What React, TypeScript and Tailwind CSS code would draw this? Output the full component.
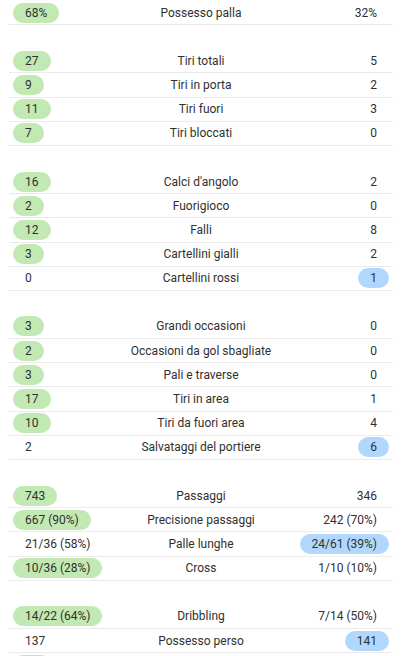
import React from 'react';

type Side = 'L' | 'R';
type Stat = { home: string; label: string; away: string; best: Side };

const groups: Stat[][] = [
  [{ home: '68%', label: 'Possesso palla', away: '32%', best: 'L' }],
  [
    { home: '27', label: 'Tiri totali', away: '5', best: 'L' },
    { home: '9', label: 'Tiri in porta', away: '2', best: 'L' },
    { home: '11', label: 'Tiri fuori', away: '3', best: 'L' },
    { home: '7', label: 'Tiri bloccati', away: '0', best: 'L' },
  ],
  [
    { home: '16', label: "Calci d'angolo", away: '2', best: 'L' },
    { home: '2', label: 'Fuorigioco', away: '0', best: 'L' },
    { home: '12', label: 'Falli', away: '8', best: 'L' },
    { home: '3', label: 'Cartellini gialli', away: '2', best: 'L' },
    { home: '0', label: 'Cartellini rossi', away: '1', best: 'R' },
  ],
  [
    { home: '3', label: 'Grandi occasioni', away: '0', best: 'L' },
    { home: '2', label: 'Occasioni da gol sbagliate', away: '0', best: 'L' },
    { home: '3', label: 'Pali e traverse', away: '0', best: 'L' },
    { home: '17', label: 'Tiri in area', away: '1', best: 'L' },
    { home: '10', label: 'Tiri da fuori area', away: '4', best: 'L' },
    { home: '2', label: 'Salvataggi del portiere', away: '6', best: 'R' },
  ],
  [
    { home: '743', label: 'Passaggi', away: '346', best: 'L' },
    { home: '667 (90%)', label: 'Precisione passaggi', away: '242 (70%)', best: 'L' },
    { home: '21/36 (58%)', label: 'Palle lunghe', away: '24/61 (39%)', best: 'R' },
    { home: '10/36 (28%)', label: 'Cross', away: '1/10 (10%)', best: 'L' },
  ],
  [
    { home: '14/22 (64%)', label: 'Dribbling', away: '7/14 (50%)', best: 'L' },
    { home: '137', label: 'Possesso perso', away: '141', best: 'R' },
    { home: '18', label: 'Duelli vinti', away: '12', best: 'L' },
  ],
];

function Value({ text, pill }: { text: string; pill?: 'green' | 'blue' }) {
  if (!pill) return <span className="px-3 leading-5">{text}</span>;
  return (
    <span
      className={`h-5 rounded-full px-3 leading-5 ${pill === 'green' ? 'bg-[#c2e9b3]' : 'bg-[#b1d8fc]'}`}
    >
      {text}
    </span>
  );
}

function StatRow({ s }: { s: Stat }) {
  return (
    <div className="mx-[9px] grid h-[24.2px] grid-cols-[1fr_auto_1fr] items-center border-b border-[#ebebeb] px-1">
      <div className="flex justify-start whitespace-nowrap">
        <Value text={s.home} pill={s.best === 'L' ? 'green' : undefined} />
      </div>
      <div className="whitespace-nowrap px-2 text-center">{s.label}</div>
      <div className="flex justify-end whitespace-nowrap">
        <Value text={s.away} pill={s.best === 'R' ? 'blue' : undefined} />
      </div>
    </div>
  );
}

export default function App() {
  return (
    <div className="min-h-screen bg-white pt-px font-['Roboto',sans-serif] text-[12px] text-[#303030]">
      <div className="flex flex-col gap-6">
        {groups.map((g, i) => (
          <div key={i}>
            {g.map((s) => (
              <StatRow key={s.label} s={s} />
            ))}
          </div>
        ))}
      </div>
    </div>
  );
}
